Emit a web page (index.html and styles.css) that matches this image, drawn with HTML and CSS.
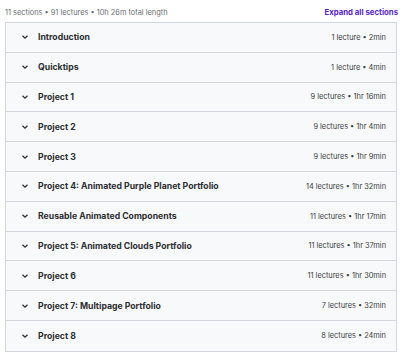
FILE: index.html
```html
<!DOCTYPE html>
<html lang="en">
<head>
  <meta charset="UTF-8">
  <title>Course content</title>
  <link rel="stylesheet" href="styles.css">
</head>
<body>
  <div class="curriculum">
    <div class="summary">
      <span>11 sections • 91 lectures • 10h 26m total length</span>
      <button class="expandAll">Expand all sections</button>
    </div>

    <div class="sections">
      <div class="section">
        <svg class="chevron" viewBox="0 0 10 10"><path d="M2.5 3.8 L5 6.2 L7.5 3.8"/></svg>
        <span class="title">Introduction</span>
        <span class="meta">1 lecture • 2min</span>
      </div>
      <div class="section">
        <svg class="chevron" viewBox="0 0 10 10"><path d="M2.5 3.8 L5 6.2 L7.5 3.8"/></svg>
        <span class="title">Quicktips</span>
        <span class="meta">1 lecture • 4min</span>
      </div>
      <div class="section">
        <svg class="chevron" viewBox="0 0 10 10"><path d="M2.5 3.8 L5 6.2 L7.5 3.8"/></svg>
        <span class="title">Project 1</span>
        <span class="meta">9 lectures • 1hr 16min</span>
      </div>
      <div class="section">
        <svg class="chevron" viewBox="0 0 10 10"><path d="M2.5 3.8 L5 6.2 L7.5 3.8"/></svg>
        <span class="title">Project 2</span>
        <span class="meta">9 lectures • 1hr 4min</span>
      </div>
      <div class="section">
        <svg class="chevron" viewBox="0 0 10 10"><path d="M2.5 3.8 L5 6.2 L7.5 3.8"/></svg>
        <span class="title">Project 3</span>
        <span class="meta">9 lectures • 1hr 9min</span>
      </div>
      <div class="section">
        <svg class="chevron" viewBox="0 0 10 10"><path d="M2.5 3.8 L5 6.2 L7.5 3.8"/></svg>
        <span class="title">Project 4: Animated Purple Planet Portfolio</span>
        <span class="meta">14 lectures • 1hr 32min</span>
      </div>
      <div class="section">
        <svg class="chevron" viewBox="0 0 10 10"><path d="M2.5 3.8 L5 6.2 L7.5 3.8"/></svg>
        <span class="title">Reusable Animated Components</span>
        <span class="meta">11 lectures • 1hr 17min</span>
      </div>
      <div class="section">
        <svg class="chevron" viewBox="0 0 10 10"><path d="M2.5 3.8 L5 6.2 L7.5 3.8"/></svg>
        <span class="title">Project 5: Animated Clouds Portfolio</span>
        <span class="meta">11 lectures • 1hr 37min</span>
      </div>
      <div class="section">
        <svg class="chevron" viewBox="0 0 10 10"><path d="M2.5 3.8 L5 6.2 L7.5 3.8"/></svg>
        <span class="title">Project 6</span>
        <span class="meta">11 lectures • 1hr 30min</span>
      </div>
      <div class="section">
        <svg class="chevron" viewBox="0 0 10 10"><path d="M2.5 3.8 L5 6.2 L7.5 3.8"/></svg>
        <span class="title">Project 7: Multipage Portfolio</span>
        <span class="meta">7 lectures • 32min</span>
      </div>
      <div class="section">
        <svg class="chevron" viewBox="0 0 10 10"><path d="M2.5 3.8 L5 6.2 L7.5 3.8"/></svg>
        <span class="title">Project 8</span>
        <span class="meta">8 lectures • 24min</span>
      </div>
    </div>
  </div>
</body>
</html>
```

FILE: styles.css
```css
* { box-sizing: border-box; margin: 0; padding: 0; }

html, body {
  background: #ffffff;
  font-family: Inter, "Noto Sans", sans-serif;
  color: #2d2f31;
}

.curriculum {
  padding: 4px 2px 0 5px;
}

.summary {
  display: flex;
  justify-content: space-between;
  align-items: center;
  height: 16px;
  margin-bottom: 2px;
  font-size: 7.4px;
  color: #6a6f73;
}

.expandAll {
  border: none;
  background: none;
  font-family: inherit;
  font-size: 7.8px;
  font-weight: 700;
  color: #5624d0;
  cursor: pointer;
}

.sections {
  border: 1px solid #d1d7dc;
  width: 392px;
}

.section {
  display: flex;
  align-items: center;
  height: 29.8px;
  padding: 0 10px 0 14px;
  background: #f7f9fa;
  border-bottom: 1px solid #d1d7dc;
}

.section:last-child { border-bottom: none; }

.chevron {
  width: 10px;
  height: 10px;
  margin-right: 8px;
  fill: none;
  stroke: #2d2f31;
  stroke-width: 1.3;
}

.title {
  flex: 1;
  font-size: 8.7px;
  font-weight: 700;
}

.meta {
  font-size: 7.4px;
  color: #3e4143;
}
```
